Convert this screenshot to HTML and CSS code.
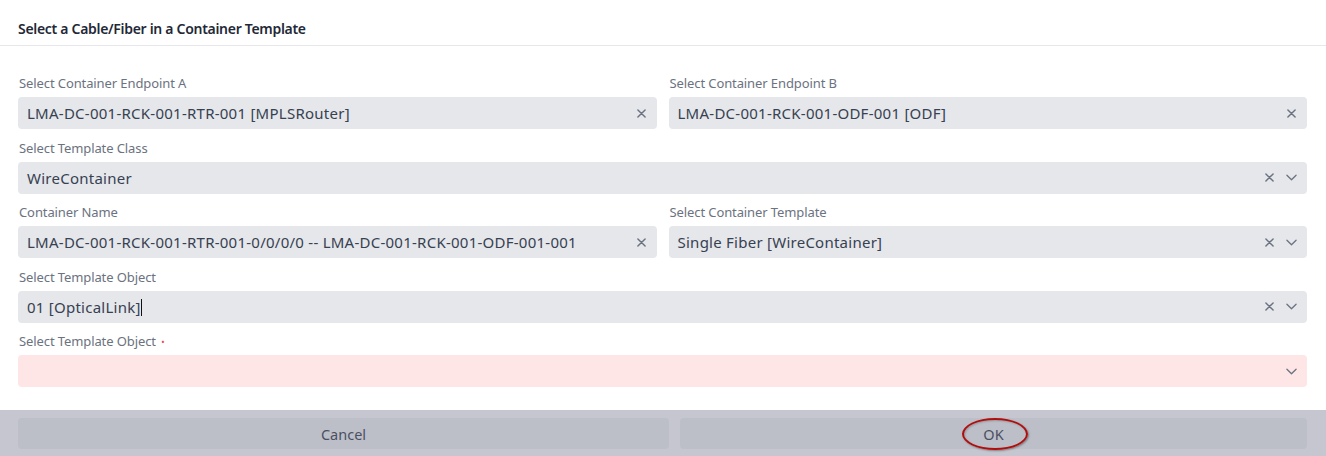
FILE: index.html
```html
<!DOCTYPE html>
<html>
<head>
<meta charset="utf-8">
<link rel="stylesheet" href="styles.css">
</head>
<body>
<div class="modal">
  <div class="header">Select a Cable/Fiber in a Container Template</div>
  <div class="body">
    <div class="row two">
      <div class="field">
        <div class="label">Select Container Endpoint A</div>
        <div class="input"><span class="value">LMA-DC-001-RCK-001-RTR-001 [MPLSRouter]</span>
          <span class="icons"><svg class="ix" viewBox="0 0 10 10"><path d="M1 1L9 9M9 1L1 9"/></svg></span></div>
      </div>
      <div class="field">
        <div class="label">Select Container Endpoint B</div>
        <div class="input"><span class="value">LMA-DC-001-RCK-001-ODF-001 [ODF]</span>
          <span class="icons"><svg class="ix" viewBox="0 0 10 10"><path d="M1 1L9 9M9 1L1 9"/></svg></span></div>
      </div>
    </div>
    <div class="row">
      <div class="field">
        <div class="label">Select Template Class</div>
        <div class="input"><span class="value">WireContainer</span>
          <span class="icons"><svg class="ix" viewBox="0 0 10 10"><path d="M1 1L9 9M9 1L1 9"/></svg><svg class="chev" viewBox="0 0 12 7"><path d="M1 1L6 6L11 1"/></svg></span></div>
      </div>
    </div>
    <div class="row two">
      <div class="field">
        <div class="label">Container Name</div>
        <div class="input"><span class="value">LMA-DC-001-RCK-001-RTR-001-0/0/0/0 -- LMA-DC-001-RCK-001-ODF-001-001</span>
          <span class="icons"><svg class="ix" viewBox="0 0 10 10"><path d="M1 1L9 9M9 1L1 9"/></svg></span></div>
      </div>
      <div class="field">
        <div class="label">Select Container Template</div>
        <div class="input"><span class="value">Single Fiber [WireContainer]</span>
          <span class="icons"><svg class="ix" viewBox="0 0 10 10"><path d="M1 1L9 9M9 1L1 9"/></svg><svg class="chev" viewBox="0 0 12 7"><path d="M1 1L6 6L11 1"/></svg></span></div>
      </div>
    </div>
    <div class="row">
      <div class="field">
        <div class="label">Select Template Object</div>
        <div class="input"><span class="value">01 [OpticalLink]<span class="caret"></span></span>
          <span class="icons"><svg class="ix" viewBox="0 0 10 10"><path d="M1 1L9 9M9 1L1 9"/></svg><svg class="chev" viewBox="0 0 12 7"><path d="M1 1L6 6L11 1"/></svg></span></div>
      </div>
    </div>
    <div class="row">
      <div class="field">
        <div class="label">Select Template Object <span class="req">•</span></div>
        <div class="input error"><span class="value"></span>
          <span class="icons"><svg class="chev" viewBox="0 0 12 7"><path d="M1 1L6 6L11 1"/></svg></span></div>
      </div>
    </div>
  </div>
  <div class="footer">
    <button class="btn">Cancel</button>
    <button class="btn ok">OK<span class="mark"></span></button>
  </div>
</div>
</body>
</html>
```

FILE: styles.css
```css
html, body {
  margin: 0;
  padding: 0;
  background: #ffffff;
}
body {
  font-family: "Noto Sans", "Open Sans", sans-serif;
  color: #374151;
}
.modal {
  width: 1326px;
  height: 456px;
  display: flex;
  flex-direction: column;
  background: #fff;
}
.header {
  height: 46px;
  box-sizing: border-box;
  padding: 12px 18px 0 18px;
  display: flex;
  align-items: center;
  font-size: 14px;
  font-weight: 600;
  color: #1f2937;
  letter-spacing: -0.3px;
  border-bottom: 1px solid #e5e7eb;
}
.body {
  flex: 1;
  padding: 28px 19px 0 18px;
  display: flex;
  flex-direction: column;
  gap: 9.5px;
}
.row {
  display: grid;
  grid-template-columns: 1fr;
}
.row.two {
  grid-template-columns: 1fr 1fr;
  column-gap: 12px;
}
.label {
  font-size: 13px;
  line-height: 19px;
  color: #6b7280;
  margin-bottom: 4px;
  padding-left: 1px;
  letter-spacing: -0.1px;
}
.req {
  color: #ef4444;
  font-size: 9px;
  margin-left: 2px;
  vertical-align: 1px;
}
.input {
  height: 32px;
  background: #e5e7eb;
  border-radius: 4px;
  display: flex;
  align-items: center;
  padding: 0 10px 0 9px;
}
.input.error {
  background: #fee6e6;
}
.value {
  flex: 1;
  font-size: 15px;
  color: #374151;
  white-space: nowrap;
  letter-spacing: 0.25px;
}
.caret {
  display: inline-block;
  width: 1px;
  height: 17px;
  background: #111;
  vertical-align: -3px;
}
.icons {
  display: flex;
  align-items: center;
  gap: 11px;
}
.ix {
  width: 9px;
  height: 9px;
  margin-right: 1px;
}
.ix path, .chev path {
  fill: none;
  stroke: #6b7280;
  stroke-width: 1.6;
  stroke-linecap: round;
  stroke-linejoin: round;
}
.chev {
  width: 11px;
  height: 7px;
}
.chev path {
  stroke-width: 1.4;
}
.footer {
  height: 46px;
  background: #c5c6cf;
  display: grid;
  grid-template-columns: 651px 627px;
  column-gap: 11px;
  padding: 8px 19px 7px 18px;
  box-sizing: border-box;
}
.btn {
  border: none;
  border-radius: 4px;
  background: #bcbfc8;
  font-family: "Noto Sans", "Open Sans", sans-serif;
  font-size: 14.5px;
  color: #4b4f62;
  padding: 0;
  margin: 0;
}
.ok {
  position: relative;
}
.mark {
  position: absolute;
  left: 50%;
  top: 50%;
  width: 62px;
  height: 28px;
  margin-left: -32px;
  margin-top: -16px;
  border: 2px solid #b00d0d;
  border-radius: 50%;
  box-shadow: 1px 1px 2px rgba(0,0,0,0.35), inset 1px 1px 2px rgba(0,0,0,0.2);
}
```
